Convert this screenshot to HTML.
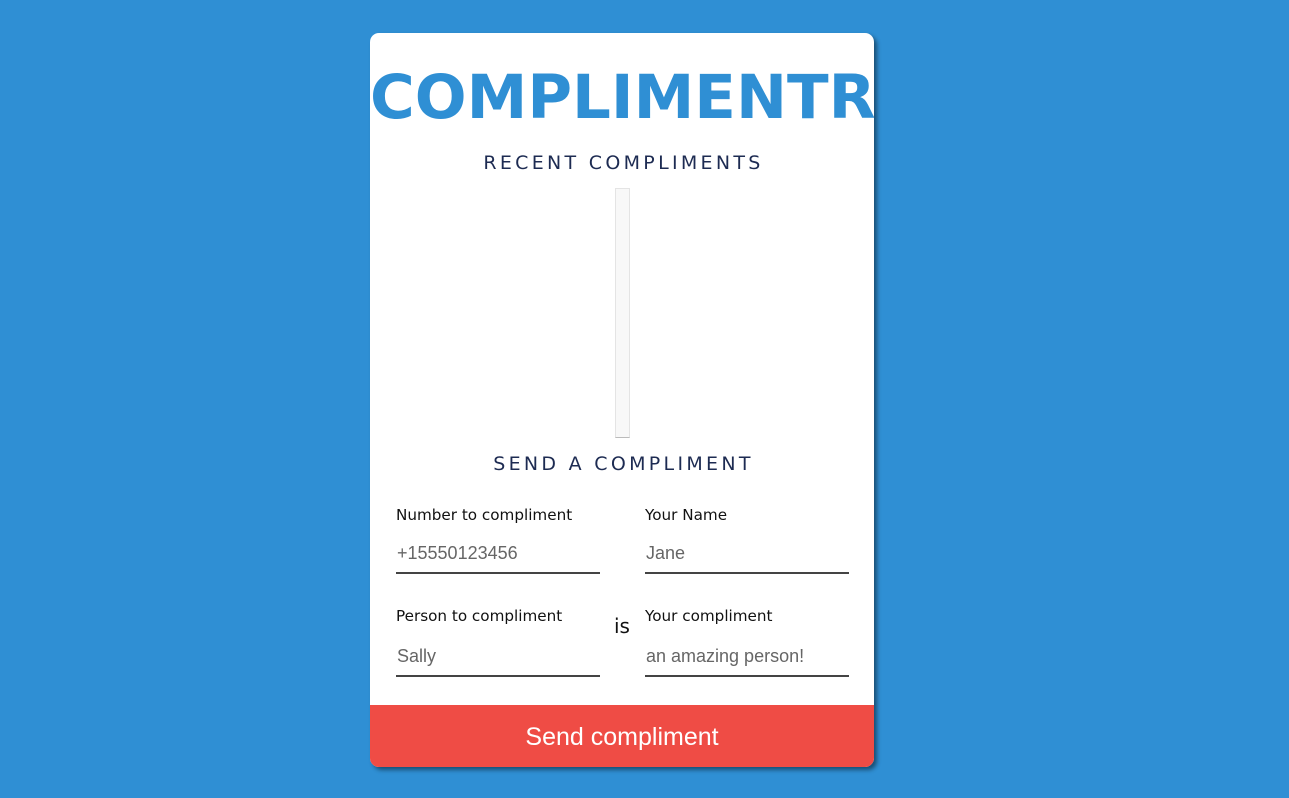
<!DOCTYPE html>
<html><head><style>
*{margin:0;padding:0;box-sizing:border-box}
body{width:1289px;height:798px;background:#2f8fd4;position:relative;overflow:hidden;font-family:"DejaVu Sans",Verdana,sans-serif}
.card{position:absolute;left:370px;top:33px;width:504px;height:734px;background:#fff;border-radius:9px;box-shadow:3px 3px 4px rgba(0,0,0,.45);overflow:hidden}
.t{position:absolute;left:0;width:504px;text-align:center;white-space:nowrap}
.title{top:29px;font-weight:bold;font-size:61px;color:#2f8fd4;line-height:72px;letter-spacing:0}
.h{font-size:19px;color:#1d2b52;letter-spacing:3.3px;line-height:24px;padding-left:3px}
.box{position:absolute;left:245px;top:155px;width:15px;height:250px;background:#f8f8f8;border:1px solid #e4e4e4;border-bottom:1px solid #bbb}
.lab{position:absolute;font-size:15.2px;color:#111;line-height:18px;white-space:nowrap}
.inp{position:absolute;width:204px;height:32px;border-bottom:2px solid #444;font-family:"Liberation Sans",Arial,sans-serif;font-size:18px;color:#666;padding-left:1px;line-height:22px;white-space:nowrap}
.is{position:absolute;left:244px;top:581px;font-size:20px;color:#111}
.btn{position:absolute;left:0;top:672px;width:504px;height:62px;background:#ef4c45;color:#fff;font-family:"Liberation Sans",Arial,sans-serif;font-size:25px;text-align:center;line-height:64px}
</style></head><body>
<div class="card">
<div class="t title">COMPLIMENTR</div>
<div class="t h" style="top:118px">RECENT COMPLIMENTS</div>
<div class="box"></div>
<div class="t h" style="top:419px">SEND A COMPLIMENT</div>
<div class="lab" style="left:26px;top:473px">Number to compliment</div>
<div class="lab" style="left:275px;top:473px">Your Name</div>
<div class="inp" style="left:26px;top:509px">+15550123456</div>
<div class="inp" style="left:275px;top:509px">Jane</div>
<div class="lab" style="left:26px;top:574px">Person to compliment</div>
<div class="lab" style="left:275px;top:574px">Your compliment</div>
<div class="is">is</div>
<div class="inp" style="left:26px;top:612px">Sally</div>
<div class="inp" style="left:275px;top:612px">an amazing person!</div>
<div class="btn">Send compliment</div>
</div>
</body></html>
